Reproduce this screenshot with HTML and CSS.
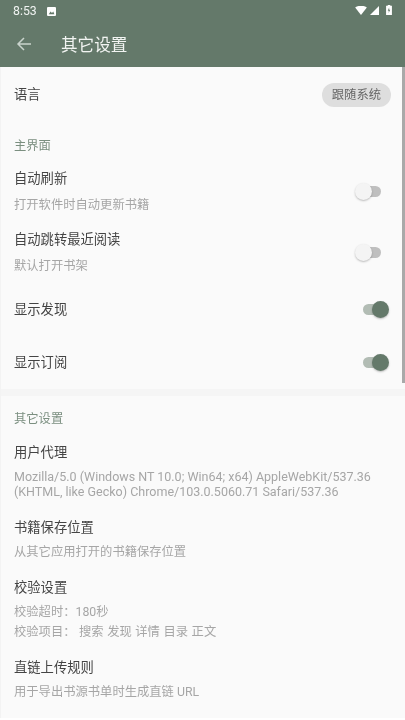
FILE: index.html
```html
<!DOCTYPE html>
<html lang="zh-CN">
<head>
<meta charset="utf-8">
<title>其它设置</title>
<link rel="stylesheet" href="styles.css">
</head>
<body>
<div class="phone">
  <header class="appbar">
    <div class="status">
      <span class="time">8:53</span>
      <svg class="pic" viewBox="0 0 10 10"><rect width="10" height="10" rx="1.2" fill="#fff"/><path d="M2 8l2-3 1.5 1.8L7 5l1.2 3z" fill="#64796a"/></svg>
      <span class="status-right">
        <svg class="wifi" viewBox="0 0 13 10"><path d="M0 1.6C3.8-.9 9.2-.9 13 1.6L6.500 10z" fill="#fff"/></svg>
        <svg class="signal" viewBox="0 0 10 10"><path d="M10 0v10H0z" fill="#fff"/></svg>
        <svg class="battery" viewBox="0 0 7 12"><path d="M2 0h3v1h2v11H0V1h2z" fill="#fff"/><path d="M3.700 3L2 6.800h1.300L3 9.500 5 5.700H3.700z" fill="#64796a"/></svg>
      </span>
    </div>
    <div class="toolbar">
      <svg class="back" viewBox="0 0 16 16"><path d="M15 8H2M8 2L2 8l6 6" fill="none" stroke="#c9d3cc" stroke-width="1.500"/></svg>
      <h1>其它设置</h1>
    </div>
  </header>
  <main class="content">
    <div class="scrollbar"></div>
    <div class="row lang">
      <span class="title">语言</span>
      <span class="chip">跟随系统</span>
    </div>
    <div class="cat first">主界面</div>
    <div class="row sw sw-a">
      <div class="text"><div class="title">自动刷新</div><div class="sub">打开软件时自动更新书籍</div></div>
      <span class="switch"><i></i></span>
    </div>
    <div class="row sw sw-a">
      <div class="text"><div class="title">自动跳转最近阅读</div><div class="sub">默认打开书架</div></div>
      <span class="switch"><i></i></span>
    </div>
    <div class="row sw sw-b">
      <div class="title">显示发现</div>
      <span class="switch on"><i></i></span>
    </div>
    <div class="row sw sw-b">
      <div class="title">显示订阅</div>
      <span class="switch on"><i></i></span>
    </div>
    <div class="divider"></div>
    <div class="cat">其它设置</div>
    <div class="item">
      <div class="title">用户代理</div>
      <div class="sub ua">Mozilla/5.0 (Windows NT 10.0; Win64; x64) AppleWebKit/537.36<br>(KHTML, like Gecko) Chrome/103.0.5060.71 Safari/537.36</div>
    </div>
    <div class="item">
      <div class="title">书籍保存位置</div>
      <div class="sub">从其它应用打开的书籍保存位置</div>
    </div>
    <div class="item item-check">
      <div class="title">校验设置</div>
      <div class="sub check">校验超时：180秒<br>校验项目： 搜索 发现 详情 目录 正文</div>
    </div>
    <div class="item">
      <div class="title">直链上传规则</div>
      <div class="sub">用于导出书源书单时生成直链 URL</div>
    </div>
  </main>
</div>
</body>
</html>
```
FILE: styles.css
```css
* { box-sizing: border-box; }
html, body { margin: 0; padding: 0; }
body {
  width: 405px;
  height: 720px;
  overflow: hidden;
  background: #fff;
  font-family: "Roboto", "Noto Sans CJK SC", sans-serif;
}
.phone { width: 405px; height: 718px; display: flex; flex-direction: column; background: #fafafa; filter: blur(0.35px); }
.appbar { height: 67px; background: #64796a; color: #fff; flex: none; }
.status { height: 22px; display: flex; align-items: center; padding: 0 13px 0 13px; }
.time { font-size: 12.300px; color: #f0f3f1; }
.pic { width: 9px; height: 9px; margin-left: 10px; }
.status-right { margin-left: auto; margin-bottom: 2px; display: flex; align-items: center; gap: 3px; }
.wifi { width: 12px; height: 9px; }
.signal { width: 9px; height: 9px; }
.battery { width: 6px; height: 10px; margin-left: 4px; }
.toolbar { height: 44px; display: flex; align-items: center; padding: 0 0 0 16px; }
.back { width: 16px; height: 16px; }
.toolbar h1 { margin: 0 0 0 29px; font-size: 16.600px; font-weight: 400; color: #f2f4f2; }
.content { position: relative; flex: 1; padding-top: 11px; overflow: hidden; border-left: 1px solid #f3f3f3; }
.scrollbar { position: absolute; right: 0; top: 0; width: 3px; height: 316px; background: #a9a9a9; }
.row { display: flex; align-items: center; justify-content: space-between; padding: 0 14px 0 13px; }
.lang { height: 34px; }
.title { font-size: 13.300px; line-height: 18px; color: #444; }
.sub { font-size: 12.300px; line-height: 16px; color: #a6a6a6; }
.chip { font-size: 12.300px; line-height: 24px; height: 24px; padding: 0 10px; border-radius: 12px; background: #dedede; color: #666; }
.cat { font-size: 12.300px; line-height: 16px; padding-left: 13px; color: #7b8f80; margin-top: 15px; }
.cat.first { margin-top: 26px; margin-bottom: 7px; }
.text { display: flex; flex-direction: column; gap: 9px; }
.sw-a { height: 61px; padding-right: 24px; }
.sw-b { height: 53px; padding-right: 19px; }
.switch { position: relative; width: 23px; height: 11px; border-radius: 6px; background: #bfbfbf; display: block; }
.switch i { position: absolute; left: -3px; top: -3px; width: 17px; height: 17px; border-radius: 50%; background: #f4f4f4; box-shadow: 0 1px 2px rgba(0,0,0,.25); }
.switch.on { background: #b2bcb4; }
.switch.on i { left: 9px; background: #64796a; }
.divider { height: 7px; background: #f5f5f5; }
.item { padding: 0 20px 0 13px; }
.item .title { margin-bottom: 7px; }
.item + .item { margin-top: 20px; }
.cat + .item { margin-top: 17px; }
.ua { font-size: 12.500px; line-height: 15px; }
.item.item-check { margin-top: 19px; }
.item-check + .item { margin-top: 17px; }
.item-check .title { margin-bottom: 5px; }
.check { line-height: 20px; word-spacing: .5px; }
```
